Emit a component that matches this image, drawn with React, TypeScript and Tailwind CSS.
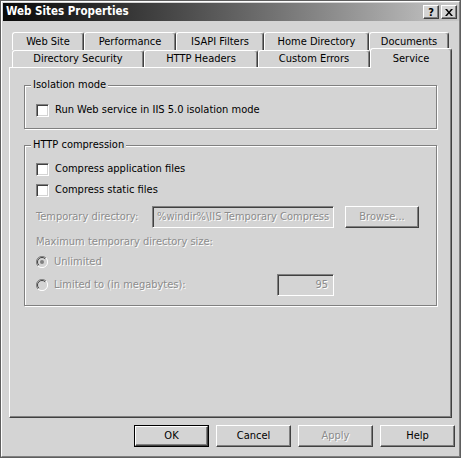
import React from "react";

function Tab({ label, w, selected }: { label: string; w: string; selected?: boolean }) {
  if (selected) {
    return (
      <div
        className={`${w} relative z-10 -mt-[2px] h-[20px] bg-[#d4d4d4] border-t border-l border-white border-r border-r-[#404040] rounded-t-[3px] shadow-[inset_-1px_0_0_#808080] flex items-start justify-center pt-[2px] text-[11px] text-black`}
      >
        {label}
      </div>
    );
  }
  return (
    <div
      className={`${w} h-full bg-[#d4d4d4] border-t border-l border-white border-r border-r-[#404040] rounded-t-[3px] shadow-[inset_-1px_0_0_#808080] flex items-center justify-center pt-[1px] text-[11px] text-black`}
    >
      {label}
    </div>
  );
}

function Check() {
  return (
    <div className="w-[13px] h-[13px] shrink-0 bg-white border border-t-[#808080] border-l-[#808080] border-b-white border-r-white shadow-[inset_1px_1px_0_#404040,inset_-1px_-1px_0_#d4d4d4]" />
  );
}

function Radio({ on }: { on?: boolean }) {
  return (
    <svg width="12" height="12" viewBox="0 0 12 12" className="shrink-0">
      <circle cx="6" cy="6" r="5.5" fill="#d4d4d4" />
      <path d="M10 2 A5.5 5.5 0 0 0 2 10" fill="none" stroke="#808080" strokeWidth="1" />
      <path d="M9.2 2.8 A4.5 4.5 0 0 0 2.8 9.2" fill="none" stroke="#404040" strokeWidth="1" />
      <path d="M2 10 A5.5 5.5 0 0 0 10 2" fill="none" stroke="#ffffff" strokeWidth="1" />
      {on ? <circle cx="6" cy="6" r="2" fill="#808080" /> : null}
    </svg>
  );
}

function Group({ label, children, cls }: { label: string; children: React.ReactNode; cls: string }) {
  return (
    <div className={`relative w-[413px] border border-[#808080] shadow-[1px_1px_0_#fff,inset_1px_1px_0_#fff] ${cls}`}>
      <div className="absolute -top-[8px] left-[6px] px-[2px] bg-[#d4d4d4] text-[11px] leading-[14px] text-black">
        {label}
      </div>
      {children}
    </div>
  );
}

const dis = "text-[#8c8c8c] [text-shadow:1px_1px_0_#ffffff]";

function Button({ label, def, disabled }: { label: string; def?: boolean; disabled?: boolean }) {
  return (
    <div className={`w-[75px] h-[22px] ${def ? "border border-black" : ""}`}>
      <div
        className={`w-full h-full bg-[#d4d4d4] border border-t-white border-l-white border-b-[#404040] border-r-[#404040] shadow-[inset_-1px_-1px_0_#808080] flex items-center justify-center text-[11px] ${disabled ? "text-[#8c8c8c] [text-shadow:1px_1px_0_#ffffff]" : "text-black"}`}
      >
        {label}
      </div>
    </div>
  );
}

export default function App() {
  return (
    <div className="w-[461px] h-[458px] border border-[#5e5e5e] bg-[#d4d4d4] font-['DejaVu_Sans_Condensed','Liberation_Sans',sans-serif]">
      <div className="w-full h-full border border-t-white border-l-white border-b-[#808080] border-r-[#808080] flex flex-col">
        {/* title bar */}
        <div className="ml-[1px] mt-[1px] h-[18px] bg-gradient-to-r from-[#0a0a0a] to-[#c8c8c8] flex items-center pl-[3px] pr-[2px]">
          <span className="text-white font-bold text-[11.5px]">Web Sites Properties</span>
          <div className="ml-auto flex gap-[2px]">
            <div className="w-[16px] h-[14px] bg-[#d4d4d4] border border-t-white border-l-white border-b-[#404040] border-r-[#404040] shadow-[inset_-1px_-1px_0_#808080] flex items-center justify-center text-[11px] font-bold leading-none text-black">
              ?
            </div>
            <div className="w-[16px] h-[14px] bg-[#d4d4d4] border border-t-white border-l-white border-b-[#404040] border-r-[#404040] shadow-[inset_-1px_-1px_0_#808080] flex items-center justify-center text-black">
              <svg width="8" height="7" viewBox="0 0 8 7">
                <path d="M0 0h2l2 2.5L6 0h2L5 3.5 8 7H6L4 4.5 2 7H0l3-3.5z" fill="#000" />
              </svg>
            </div>
          </div>
        </div>

        {/* tabs */}
        <div className="ml-[10px] mt-[11px] h-[18px] flex">
          <Tab label="Web Site" w="w-[72px]" />
          <Tab label="Performance" w="w-[92px]" />
          <Tab label="ISAPI Filters" w="w-[88px]" />
          <Tab label="Home Directory" w="w-[105px]" />
          <Tab label="Documents" w="w-[80px]" />
        </div>
        <div className="ml-[10px] h-[17px] flex items-start">
          <Tab label="Directory Security" w="w-[132px]" />
          <Tab label="HTTP Headers" w="w-[114px]" />
          <Tab label="Custom Errors" w="w-[112px]" />
          <Tab label="Service" w="w-[82px]" selected />
        </div>

        {/* panel */}
        <div className="ml-[7px] w-[443px] h-[351px] border border-t-white border-l-white border-b-[#404040] border-r-[#404040] shadow-[inset_-1px_-1px_0_#808080] pl-[14px] pt-[17px] flex flex-col">
          <Group label="Isolation mode" cls="pt-[16px] pb-[10px]">
            <div className="h-[16px] flex items-center pl-[11px] gap-[6px] text-[11px] text-black">
              <Check />
              <span>Run Web service in IIS 5.0 isolation mode</span>
            </div>
          </Group>

          <Group label="HTTP compression" cls="mt-[16px] pt-[15px] pb-[9px]">
            <div className="h-[16px] flex items-center pl-[11px] gap-[6px] text-[11px] text-black">
              <Check />
              <span>Compress application files</span>
            </div>
            <div className="mt-[5px] h-[16px] flex items-center pl-[11px] gap-[6px] text-[11px] text-black">
              <Check />
              <span>Compress static files</span>
            </div>
            <div className="mt-[8px] h-[22px] flex items-center pl-[11px] text-[11px]">
              <span className={`w-[116px] ${dis}`}>Temporary directory:</span>
              <div className="w-[182px] h-[22px] border border-t-[#808080] border-l-[#808080] border-b-white border-r-white shadow-[inset_1px_1px_0_#404040,inset_-1px_-1px_0_#d4d4d4] flex items-center pl-[4px] overflow-hidden whitespace-nowrap">
                <span className={dis}>%windir%\IIS Temporary Compress</span>
              </div>
              <div className="ml-[11px] w-[74px] h-[22px] border border-t-white border-l-white border-b-[#404040] border-r-[#404040] shadow-[inset_-1px_-1px_0_#808080] flex items-center justify-center">
                <span className={dis}>Browse...</span>
              </div>
            </div>
            <div className={`mt-[7px] h-[14px] flex items-center pl-[11px] text-[11px] ${dis}`}>
              Maximum temporary directory size:
            </div>
            <div className="mt-[6px] h-[14px] flex items-center pl-[11px] gap-[6px] text-[11px]">
              <Radio on />
              <span className={dis}>Unlimited</span>
            </div>
            <div className="mt-[5px] h-[22px] flex items-center pl-[11px] text-[11px]">
              <Radio />
              <span className={`ml-[6px] w-[223px] ${dis}`}>Limited to (in megabytes):</span>
              <div className="w-[57px] h-[22px] border border-t-[#808080] border-l-[#808080] border-b-white border-r-white shadow-[inset_1px_1px_0_#404040,inset_-1px_-1px_0_#d4d4d4] flex items-center justify-end pr-[5px]">
                <span className={dis}>95</span>
              </div>
            </div>
          </Group>
        </div>

        {/* buttons */}
        <div className="mt-[7px] ml-[132px] flex gap-[7px]">
          <Button label="OK" def />
          <Button label="Cancel" />
          <Button label="Apply" disabled />
          <Button label="Help" />
        </div>
      </div>
    </div>
  );
}
